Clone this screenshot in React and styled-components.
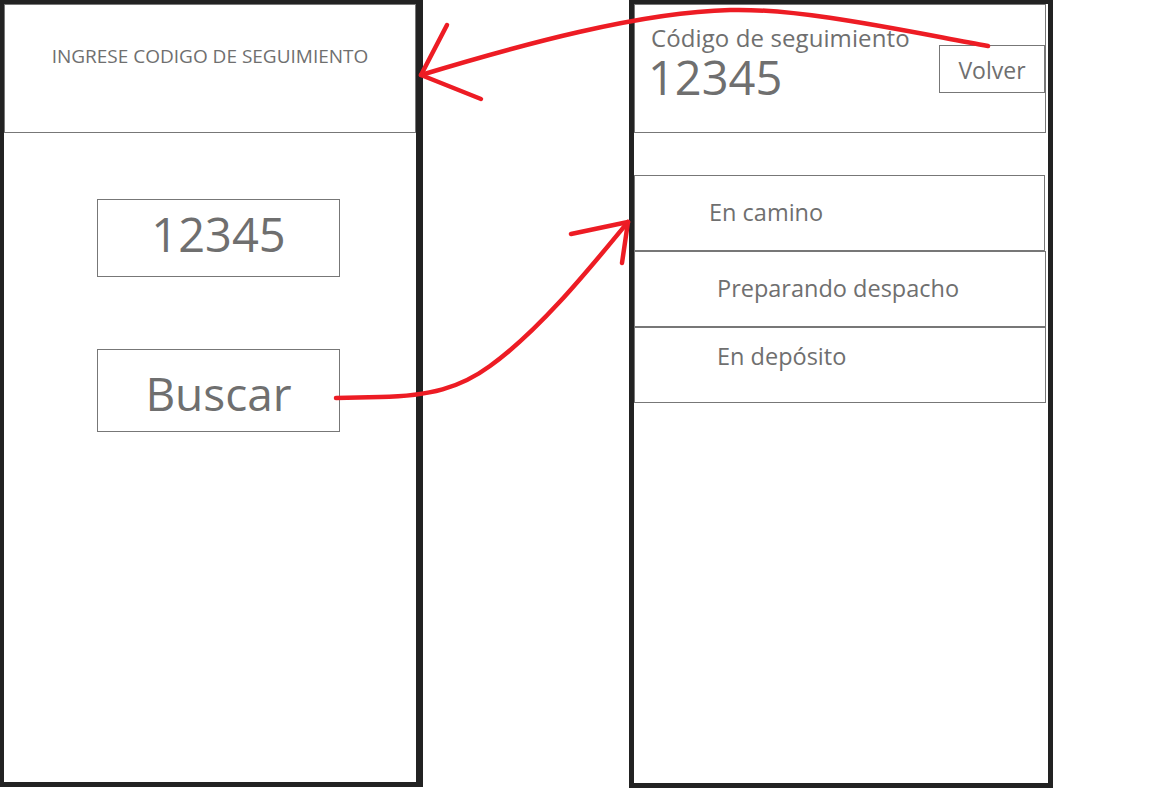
import React from "react";
import styled, { createGlobalStyle } from "styled-components";

const Global = createGlobalStyle`
  html, body { margin: 0; padding: 0; background: #ffffff; }
  body { width: 1152px; height: 789px; overflow: hidden; font-family: "Open Sans", "Noto Sans", sans-serif; }
  * { box-sizing: border-box; }
`;

const Page = styled.div`
  position: relative;
  width: 1152px;
  height: 789px;
  display: flex;
  align-items: flex-start;
  gap: 206px;
`;

const Frame = styled.div`
  width: ${(p) => p.$w}px;
  height: ${(p) => p.$h}px;
  border-style: solid;
  border-color: #222222;
  border-width: 4px ${(p) => p.$right}px 5px ${(p) => p.$left}px;
  display: flex;
  flex-direction: column;
  align-items: flex-start;
  background: #fff;
`;

const Header = styled.div`
  width: 412px;
  height: 129px;
  border: 1px solid #777777;
  flex-shrink: 0;
`;

const HeaderCaption = styled.div`
  margin-top: 42px;
  text-align: center;
  font-size: 19px;
  line-height: 1;
  color: #6f6f6f;
`;

const SearchBody = styled.div`
  padding: 66px 0 0 93px;
  display: flex;
  flex-direction: column;
  gap: 72px;
`;

const Box = styled.div`
  width: 243px;
  height: ${(p) => p.$h}px;
  border: 1px solid #777777;
  display: flex;
  align-items: center;
  justify-content: center;
  padding-top: ${(p) => p.$pt}px;
  padding-bottom: ${(p) => p.$pb}px;
  font-size: ${(p) => p.$fs}px;
  line-height: 1;
  color: #6f6f6f;
  background: #fff;
`;

const HeaderRow = styled.div`
  display: flex;
  justify-content: space-between;
  align-items: flex-start;
  height: 100%;
`;

const TitleBlock = styled.div`
  padding: 21px 0 0 16px;
  display: flex;
  flex-direction: column;
  color: #6f6f6f;
`;

const Title = styled.div`
  font-size: 24px;
  line-height: 24px;
  letter-spacing: 0.1px;
`;

const BigCode = styled.div`
  font-size: 47px;
  line-height: 47px;
  margin-top: 4px;
  margin-left: -3px;
`;

const BackButton = styled.div`
  margin-top: 40px;
  width: 106px;
  height: 48px;
  border: 1px solid #777777;
  display: flex;
  align-items: center;
  justify-content: center;
  font-size: 23px;
  line-height: 1;
  color: #6f6f6f;
  padding-top: 2px;
`;

const List = styled.div`
  margin-top: 42px;
  display: flex;
  flex-direction: column;
`;

const Row = styled.div`
  width: ${(p) => p.$w}px;
  height: 76px;
  border: 1px solid #777777;
  display: flex;
  align-items: center;
  padding-left: ${(p) => p.$pl}px;
  padding-bottom: ${(p) => p.$pb}px;
  font-size: 23.5px;
  line-height: 1;
  color: #6f6f6f;
`;

const Overlay = styled.svg`
  position: absolute;
  left: 0;
  top: 0;
  width: 1152px;
  height: 789px;
  pointer-events: none;
`;

const rows = [
  { text: "En camino", w: 411, pl: 74, pb: 0 },
  { text: "Preparando despacho", w: 412, pl: 82, pb: 0 },
  { text: "En depósito", w: 412, pl: 82, pb: 17 },
];

export default function App() {
  return (
    <>
      <Global />
      <Page>
        <Frame $w={423} $h={787} $left={4} $right={7}>
          <Header>
            <HeaderCaption>INGRESE CODIGO DE SEGUIMIENTO</HeaderCaption>
          </Header>
          <SearchBody>
            <Box $h={78} $fs={47} $pt={0} $pb={8}>12345</Box>
            <Box $h={83} $fs={46} $pt={4} $pb={0}>Buscar</Box>
          </SearchBody>
        </Frame>
        <Frame $w={424} $h={788} $left={5} $right={5}>
          <Header>
            <HeaderRow>
              <TitleBlock>
                <Title>Código de seguimiento</Title>
                <BigCode>12345</BigCode>
              </TitleBlock>
              <BackButton>Volver</BackButton>
            </HeaderRow>
          </Header>
          <List>
            {rows.map((r) => (
              <Row key={r.text} $w={r.w} $pl={r.pl} $pb={r.pb}>
                {r.text}
              </Row>
            ))}
          </List>
        </Frame>
        <Overlay viewBox="0 0 1152 789">
          <g fill="none" stroke="#ed1c24" strokeWidth="4.5" strokeLinecap="round" strokeLinejoin="round">
            <path d="M988,46 C900,30 800,8 730,10 C640,12 520,45 421,75" />
            <path d="M447,25 L421,75 L481,99" />
            <path d="M336,398 L380,397 C430,396 460,388 490,366 C540,330 590,268 628,222" />
            <path d="M571,234 L628,222 L622,263" />
          </g>
        </Overlay>
      </Page>
    </>
  );
}
